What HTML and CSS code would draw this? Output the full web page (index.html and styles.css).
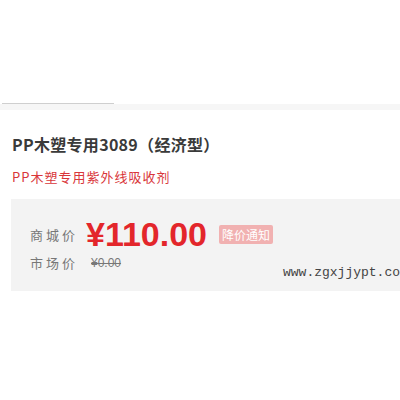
FILE: index.html
```html
<!DOCTYPE html>
<html lang="zh-CN">
<head>
    <meta charset="UTF-8">
    <title>PP木塑专用3089</title>
    <link rel="stylesheet" href="styles.css">
</head>
<body>
    <div class="tabBar">
        <div class="tabLine"></div>
        <div class="tabBand"></div>
    </div>

    <div class="productInfo">
        <h1 class="productName">PP木塑专用3089（经济型）</h1>
        <div class="productSub">PP木塑专用紫外线吸收剂</div>

        <div class="priceBox">
            <div class="priceRow">
                <span class="priceLabel">商城价</span>
                <span class="priceNow">¥110.00</span>
                <span class="priceNotice">降价通知</span>
            </div>
            <div class="priceRow marketRow">
                <span class="priceLabel">市场价</span>
                <span class="priceOld">¥0.00</span>
            </div>
            <div class="watermark">www.zgxjjypt.co</div>
        </div>
    </div>
</body>
</html>
```

FILE: styles.css
```css
body {
    margin: 0;
    background-color: #fff;
    font-family: "Noto Sans CJK SC", "Liberation Sans", sans-serif;
    overflow: hidden;
}

.tabBar {
    padding-top: 103px;
}
.tabLine {
    width: 112px;
    height: 1px;
    margin-left: 2px;
    background-color: #cfcfcf;
}
.tabBand {
    height: 6px;
    background-color: #f6f6f6;
}

.productInfo {
    padding-left: 11px;
}
.productName {
    margin: 23px 0 0 1px;
    font-size: 16px;
    line-height: 22px;
    font-weight: bold;
    letter-spacing: 0.3px;
    color: #3a3a3a;
}
.productSub {
    margin: 13px 0 0 1px;
    font-size: 13px;
    line-height: 18px;
    letter-spacing: 1px;
    color: #d9363a;
}

.priceBox {
    position: relative;
    margin-top: 13px;
    height: 92px;
    padding: 16px 0 0 19px;
    box-sizing: border-box;
    background-color: #f3f3f3;
    overflow: hidden;
}
.priceRow {
    display: flex;
    align-items: center;
}
.priceLabel {
    width: 56px;
    font-size: 13px;
    letter-spacing: 3px;
    color: #777;
}
.priceNow {
    font-family: "Liberation Sans", sans-serif;
    font-size: 34px;
    line-height: 38px;
    font-weight: bold;
    color: #e3262b;
}
.priceNotice {
    margin-left: 12px;
    padding: 0 3px;
    font-size: 12px;
    line-height: 19px;
    color: #fff;
    background-color: #f1b1b1;
    border-radius: 2px;
}
.marketRow {
    margin-top: 0;
}
.priceOld {
    margin-left: 5px;
    font-family: "Liberation Sans", sans-serif;
    font-size: 12px;
    color: #777;
    text-decoration: line-through;
}

.watermark {
    position: absolute;
    left: 272px;
    top: 66px;
    font-family: "Liberation Mono", monospace;
    font-size: 13px;
    color: #444;
    white-space: nowrap;
}
```
